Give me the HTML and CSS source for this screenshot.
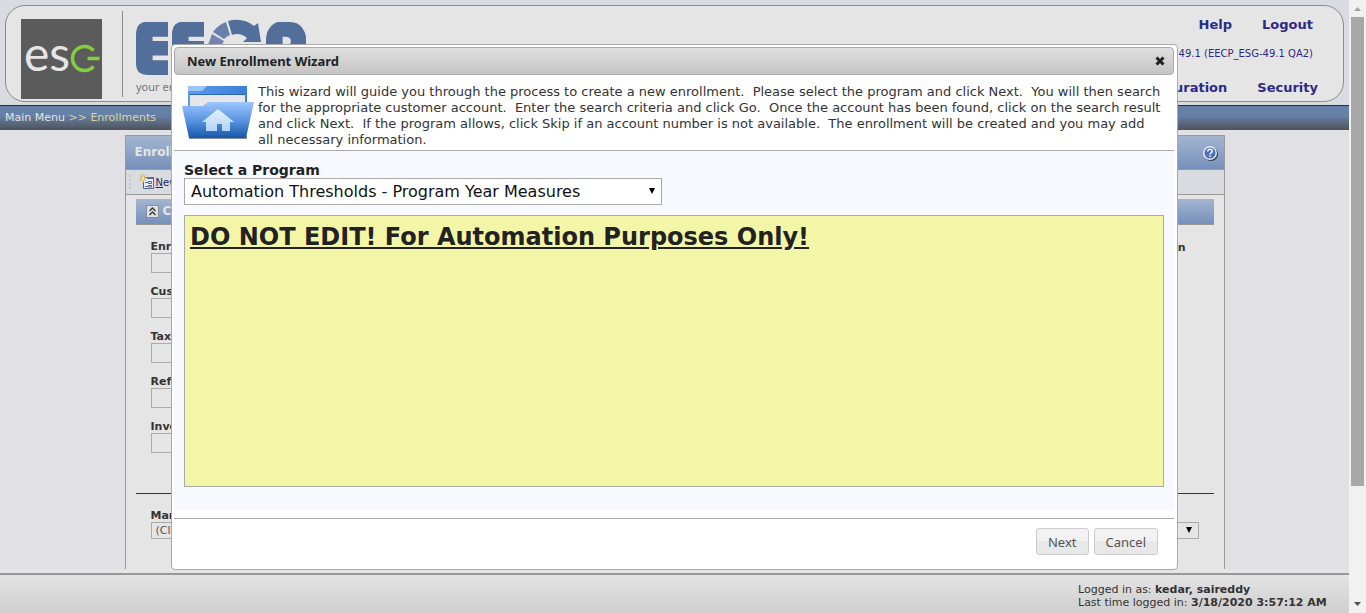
FILE: index.html
```html
<!DOCTYPE html>
<html lang="en">
<head>
<meta charset="utf-8">
<title>New Enrollment Wizard</title>
<link rel="stylesheet" href="styles.css">
</head>
<body>
<div class="window">
  <div class="app">
    <header class="top">
      <div class="banner">
        <div class="esg">
          <svg viewBox="0 0 81 80" width="81" height="80" role="img" aria-label="esg">
            <text x="3" y="52" class="esg-text">es</text>
            <path d="M72.500 31.500A12 12 0 1 0 72.500 47.500M66.500 39.500H78.500" fill="none" stroke="#82cf3b" stroke-width="3.500"/>
          </svg>
        </div>
        <div class="brand">
          <svg viewBox="0 0 176 58" width="176" height="58" role="img" aria-label="EECP">
            <defs>
              <clipPath id="clip-a"><path d="M35 2V56H15Q3 56 3 44V16Q3 2 17 2Z"/></clipPath>
              <clipPath id="clip-b"><path d="M71 2V56H51Q39 56 39 44V16Q39 2 53 2Z"/></clipPath>
              <clipPath id="clip-c"><path d="M133 58V20A20 19 0 0 1 173 20V58Z"/></clipPath>
            </defs>
            <text x="1" y="54" class="eecp-text" clip-path="url(#clip-a)">E</text>
            <text x="37" y="54" class="eecp-text" clip-path="url(#clip-b)">E</text>
            <text x="131" y="54" class="eecp-text" clip-path="url(#clip-c)">P</text>
            <path fill="#7484b0" d="M75 26 79 15 91 22Q88 26 88 34H75Z"/>
            <path fill="#6b7fad" d="M80 13Q85 6 93 3L97 16Q94 17 91 20Z"/>
            <path fill="#526f9b" d="M95 2Q110-2 121 7L125 4 128 23H110Q113 20 114 19 107 13 99 16Z"/>
          </svg>
          <span class="tagline">your energy</span>
        </div>
        <nav class="menus">
          <div class="links"><a href="#">Help</a><a href="#">Logout</a></div>
          <div class="version">Version 49.1 (EECP_ESG-49.1 QA2)</div>
          <div class="links"><a href="#">Configuration</a><a href="#">Security</a></div>
        </nav>
      </div>
    </header>
    <nav class="crumbs"><a href="#">Main Menu</a> <span>&gt;&gt; Enrollments</span></nav>
    <main class="main">
      <section class="panel">
        <div class="panel-title"><span>Enrollments</span>
          <svg width="16" height="16" viewBox="0 0 16 16" role="img" aria-label="Help">
            <circle cx="9" cy="9" r="7" fill="#333c4a"/><circle cx="8" cy="8" r="7" fill="#e4e8ee"/><circle cx="8" cy="8" r="5.500" fill="#4b70bd"/>
            <path d="M5.800 6.500C5.800 3.500 10.500 3.700 10.200 6.300 10 8 8 7.700 8 9.500M8 10.500V12" fill="none" stroke="#fff" stroke-width="1.500"/>
          </svg>
        </div>
        <div class="toolbar">
          <span class="grip"></span>
          <a href="#">
            <svg width="16" height="16" viewBox="0 0 16 16" aria-hidden="true">
              <path d="M2.500 3.500H14.500V14.500H4.500V8" fill="#e8edf5" stroke="#50658e"/><path d="M8 3H15V5H8Z" fill="#546b9c"/>
              <path d="M6 8.500H9M6 12.500H9" stroke="#59667e"/><path d="M9.500 7.500H12.500V9.500H9.500ZM9.500 11.500H12.500V13H9.500Z" fill="#fff" stroke="#59667e"/>
              <path d="M4 0V8M0 4H8M1 1 7 7M7 1 1 7" stroke="#d9ae42"/><circle cx="4" cy="4" r="1.500" fill="#fbe99c"/>
            </svg>
            <span><u>N</u>ew</span>
          </a>
        </div>
        <div class="content">
          <div class="section">
            <svg width="13" height="13" viewBox="0 0 13 13" aria-hidden="true"><path d="M.500.500H12.500V12.500H.500Z" fill="#dfe1e4" stroke="#555" stroke-dasharray="1 1"/><path d="M3.500 6 6.500 3 9.500 6M3.500 10 6.500 7 9.500 10" fill="none" stroke="#333" stroke-width="1.300"/></svg>
            <span>Criteria</span>
          </div>
          <div class="fields">
            <div class="column">
              <label>Enrollment<input type="text"></label>
              <label>Customer<input type="text"></label>
              <label>Tax ID<input type="text"></label>
              <label>Reference<input type="text"></label>
              <label>Invoice<input type="text"></label>
            </div>
            <div class="side">Description</div>
          </div>
          <div class="market">
            <label for="market">Market</label>
            <div class="picker">
              <select id="market"><option>(Click to select)</option></select>
              <svg width="6" height="6" viewBox="0 0 6 6" aria-hidden="true"><path d="M0 0H6L3 6Z"/></svg>
            </div>
          </div>
        </div>
      </section>
    </main>
    <footer class="footer">
      <div class="login">Logged in as: <b>kedar, saireddy</b><br>Last time logged in: <b>3/18/2020 3:57:12 AM</b></div>
    </footer>

    <div class="overlay">
      <div class="dialog" role="dialog" aria-labelledby="dialog-title">
        <div class="dialog-title">
          <span id="dialog-title">New Enrollment Wizard</span>
          <button class="close" type="button" aria-label="Close"><svg width="10" height="10" viewBox="0 0 10 10"><path d="M1.500 1.500 8.500 8.500M8.500 1.500 1.500 8.500" stroke="#222" stroke-width="3"/></svg></button>
        </div>
        <div class="intro">
          <svg width="72" height="56" viewBox="0 0 72 56" aria-hidden="true">
            <defs>
              <linearGradient id="front" x2="0" y2="1"><stop stop-color="#9cc6ff"/><stop offset=".5" stop-color="#5b96e2"/><stop offset="1" stop-color="#1557a8"/></linearGradient>
              <linearGradient id="back"><stop stop-color="#5b9bec"/><stop offset="1" stop-color="#3c7fd6"/></linearGradient>
              <linearGradient id="house" x2="0" y2="1"><stop stop-color="#e4f0ff"/><stop offset="1" stop-color="#b4d3f8"/></linearGradient>
            </defs>
            <path d="M7 52H65V55H7Z" fill="#8b9099"/>
            <path d="M6 2H65V30H6Z" fill="url(#back)"/><path d="M6 2H25L20 7H6Z" fill="#9cc5fa"/>
            <path d="M8 11H63V30H8Z" fill="#e4e6e9"/><path d="M8 10.500H63" stroke="#2a66b4"/>
            <path d="M0 22H21L26 18H72L64 54H7Z" fill="url(#front)"/>
            <path d="M36 25 52 38H48V47H40V40H35V47H24V38H20Z" fill="url(#house)"/>
          </svg>
          <p>This wizard will guide you through the process to create a new enrollment.&nbsp; Please select the program and click Next.&nbsp; You will then search for the appropriate customer account.&nbsp; Enter the search criteria and click Go.&nbsp; Once the account has been found, click on the search result and click Next.&nbsp; If the program allows, click Skip if an account number is not available.&nbsp; The enrollment will be created and you may add all&nbsp;necessary information.</p>
        </div>
        <div class="step">
          <label for="program">Select a Program</label>
          <div class="picker program">
            <select id="program"><option>Automation Thresholds - Program Year Measures</option></select>
            <svg width="6" height="6" viewBox="0 0 6 6" aria-hidden="true"><path d="M0 0H6L3 6Z"/></svg>
          </div>
          <div class="notice"><strong>DO NOT EDIT! For Automation Purposes Only!</strong></div>
        </div>
        <div class="actions"><button type="button">Next</button><button type="button">Cancel</button></div>
      </div>
    </div>
  </div>
  <div class="scrollbar" aria-hidden="true">
    <svg width="17" height="17" viewBox="0 0 17 17"><path d="M5 11H12L8.500 7Z" fill="#a3a3a3"/></svg>
    <div class="track"><div class="thumb"></div></div>
    <svg width="17" height="17" viewBox="0 0 17 17"><path d="M5 6H12L8.500 10Z" fill="#505050"/></svg>
  </div>
</div>
</body>
</html>
```

FILE: styles.css
```css
* { box-sizing: border-box; }
body { margin: 0; font: 11px/13px "DejaVu Sans", Verdana, sans-serif; color: #333; }
a { color: inherit; text-decoration: none; }
svg { flex: none; display: block; }
.window { display: flex; height: 100vh; overflow: hidden; }
.app { position: relative; flex: 1; min-width: 0; display: flex; flex-direction: column; background: #e5e5e5; }

.top { padding: 5px 5px 3px; background: #d8dbe0; }
.banner { display: flex; height: 97px; border: 1px solid #8b8b8b; border-radius: 20px; background: #e5e5e5; }
.esg { margin: 13px 20px 2px 15px; width: 81px; background: #5b5b5b; }
.esg-text { font: 48px Lato, sans-serif; fill: #e5e5e5; }
.brand { margin-top: 5px; padding: 8px 0 0 10px; height: 86px; border-left: 1px solid #8b8b8b; }
.eecp-text { font: 900 68px Inter, sans-serif; fill: #526f9b; stroke: #526f9b; stroke-width: 4px; stroke-linejoin: round; }
.tagline { display: block; margin: 3px 3px 0; font: 11px/14px "Noto Sans", sans-serif; color: #777; }
.menus { margin-left: auto; padding: 11px 25px 0 0; text-align: right; font-size: 10px; color: #2c2a86; }
.links { display: flex; justify-content: flex-end; gap: 30px; font: bold 13px/16px "DejaVu Sans", sans-serif; }
.links:first-child { padding-right: 5px; }
.version { margin: 14px 5px 20px 0; line-height: 13px; }

.crumbs { height: 25px; padding: 5px; border-top: 1px solid #26303c; background: linear-gradient(#6681a7 0 40%, #4f5258); color: #e5e5e5; }
.crumbs span { color: #dcd49e; }

.main { flex: 1; min-height: 0; padding-top: 5px; margin-bottom: 4px; background: #e1e0e5; overflow: hidden; }
.panel { max-width: 1100px; height: 100%; margin: 0 auto; border: 1px solid #999; border-bottom: 0; background: #e5e5e5; }
.panel-title { display: flex; justify-content: space-between; align-items: center; height: 34px; padding: 0 6px 0 9px; border-bottom: 1px solid #999; background: linear-gradient(#a5b5d0, #7590bb); color: #e5e5e5; font-size: 12px; font-weight: bold; }
.toolbar { display: flex; align-items: center; gap: 8px; height: 25px; padding-left: 3px; border-bottom: 1px solid #999; background: #d8dce0; font-size: 10px; color: #222266; }
.toolbar a { display: flex; gap: 1px; align-items: center; }
.grip { width: 1px; height: 14px; border-left: 2px dotted #c8c8c8; }
.content { padding: 4px 10px; }
.section { display: flex; align-items: center; gap: 4px; height: 26px; padding-left: 10px; border-bottom: 1px solid #999; background: linear-gradient(#a5b5d0, #7590bb); color: #e5e5e5; font-size: 12px; font-weight: bold; }
.fields { display: flex; justify-content: space-between; height: 269px; padding: 16px 28px 0 15px; border-bottom: 1px solid #333; font-weight: bold; }
.column { display: flex; flex-direction: column; gap: 13px; }
.column label { display: flex; flex-direction: column; line-height: 12px; }
.column input { width: 150px; height: 20px; border: 1px solid #aaa; background: #e5e5e5; }
.market { padding: 16px 15px 0; font-weight: bold; line-height: 12px; }
.picker { position: relative; }
.picker select { appearance: none; display: block; width: 100%; border: 1px solid #aaa; border-radius: 0; }
.picker svg { position: absolute; right: 7px; top: 5px; }
.market select { height: 17px; padding: 0 4px; background: #e5e5e5; color: #555; font: 11px/13px "DejaVu Sans", sans-serif; }

.footer { display: flex; justify-content: flex-end; height: 40px; padding: 8px 19px 0 0; border-top: 2px solid #999; background: linear-gradient(#e3e3e3, #cfcfcf); }
.login { min-width: 252px; }

.overlay { position: absolute; inset: 0; display: flex; justify-content: center; align-items: flex-start; padding-top: 44px; }
.dialog { width: 100%; max-width: 1007px; padding: 2px 3px 2px 2px; border: 1px solid #aaa; border-radius: 4px; background: #fff; color: #222; }
.dialog-title { display: flex; justify-content: space-between; align-items: center; height: 28px; padding: 0 8px 0 12px; border: 1px solid #aaa; border-radius: 4px; background: linear-gradient(#dfdfdf, #c5c5c5); font: bold 13px/18px "Noto Sans", sans-serif; }
.close { padding: 0; border: 0; background: none; }
.intro { display: flex; gap: 4px; padding: 9px 3px 2px 8px; border-bottom: 1px solid #aaa; }
.intro p { margin: 0; font-size: 13px; line-height: 16px; color: #333; }
.step { padding: 11px 10px 24px; background: #f8f9ff; font-size: 14px; line-height: 16px; }
.step label { display: block; font-weight: bold; }
.program { max-width: 478px; }
.program select { height: 27px; padding: 1px 6px 0; background: #fff; color: #111; font: 16px/20px "DejaVu Sans", sans-serif; }
.program svg { top: 10px; }
.notice { height: 272px; margin-top: 10px; padding: 6px 5px; border: 1px solid #aaa; background: #f4f6a7; font-size: 24px; line-height: 30px; text-decoration: underline; }
.actions { display: flex; justify-content: flex-end; gap: 5px; margin-top: 7px; padding: 9px 16px 12px; border-top: 1px solid #aaa; }
.actions button { height: 27px; padding: 0 11px; border: 1px solid #ccc; border-radius: 3px; background: linear-gradient(#f2f2f2 50%, #e8e8e8 50%); color: #555; font: 13px/18px "Noto Sans", sans-serif; }

.scrollbar { display: flex; flex-direction: column; width: 17px; background: #f1f1f1; }
.track { flex: 1; padding: 0 2px; }
.thumb { height: 81%; background: #a8a8a8; }
```
